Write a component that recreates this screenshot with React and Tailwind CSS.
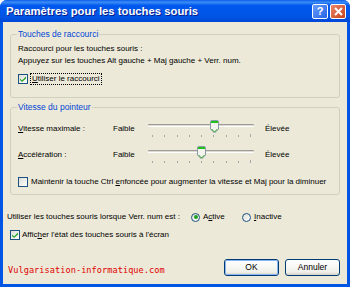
import React from 'react';

const ui = { fontFamily: '"Liberation Sans", Arial, sans-serif' };

const U = ({ children }) => <span className="underline underline-offset-[1px]">{children}</span>;

const CheckBox = ({ checked }) => (
    <span className="flex h-[10px] w-[10px] shrink-0 items-center justify-center border border-[#1C5180] bg-[linear-gradient(135deg,#DCDCD7,#FFFFFF)]">
        {checked && (
            <svg width="8" height="8" viewBox="0 0 8 8">
                <path d="M1 3.5 L3 5.5 L7 1.5 L7 3.5 L3 7 L1 5 Z" fill="#21A121" />
            </svg>
        )}
    </span>
);

const Radio = ({ checked }) => (
    <span className="flex h-[9px] w-[9px] shrink-0 items-center justify-center rounded-full border border-[#1C5180] bg-[linear-gradient(135deg,#DCDCD7,#FFFFFF)]">
        {checked && <span className="h-[4px] w-[4px] rounded-full bg-[#21A121]" />}
    </span>
);

const Slider = ({ pos }) => (
    <div className="relative h-[18px] w-[106px] shrink-0">
        <div className="absolute left-0 right-0 top-[4px] h-[3px] rounded-[1px] border-t border-[#9D9C99] border-b border-b-white bg-[#DCDAD1]" />
        <div className="absolute left-[4px] right-[3px] top-[15px] flex justify-between">
            {[0, 1, 2, 3, 4, 5, 6, 7].map(i => (
                <span key={i} className="h-[2px] w-[1px] bg-[#A7A6AA]" />
            ))}
            <span className="-mt-[1px] h-[3px] w-[1px] bg-[#A7A6AA]" />
        </div>
        <svg className="absolute top-0" style={{ left: pos }} width="9" height="14" viewBox="0 0 9 14">
            <path d="M0.5 1.5 Q0.5 0.5 1.5 0.5 H7.5 Q8.5 0.5 8.5 1.5 V9 L4.5 13 L0.5 9 Z" fill="#F4F3EE" stroke="#8C99A6" />
            <rect x="1" y="1" width="7" height="2" fill="#21C11C" />
            <path d="M1.5 9 L4.5 12 L7.5 9" fill="none" stroke="#21A121" />
        </svg>
    </div>
);

const Button = ({ children, primary }) => (
    <button className="flex h-[17px] w-[55px] shrink-0 items-center justify-center rounded-[3px] border border-[#003C74] bg-[linear-gradient(to_bottom,#FFFFFF,#F0F0EA_80%,#D6D0C5)] text-[8.5px] text-black">
        <span className={`flex h-full w-full items-center justify-center rounded-[2px] ${primary ? 'border border-[#8CB4F2]' : ''}`}>{children}</span>
    </button>
);

const App = () => {
    return (
        <div className="flex h-[287px] w-[350px] flex-col overflow-hidden rounded-t-[7px] bg-[#0055E5]" style={ui}>
            {/* title bar */}
            <div className="flex h-[22px] shrink-0 items-center justify-between bg-[linear-gradient(to_bottom,#0A5DE8_0%,#3D8DF8_10%,#0058EE_25%,#0055E5_75%,#0047D6_100%)] pl-[6px] pr-[4px]">
                <span className="text-[11.3px] font-bold text-white [text-shadow:1px_1px_0_#0A1E8C]">Paramètres pour les touches souris</span>
                <div className="flex gap-[2px]">
                    <span className="flex h-[15px] w-[16px] items-center justify-center rounded-[2px] border border-white bg-[linear-gradient(135deg,#6A9EFB,#2463E6)] text-[11px] font-bold leading-none text-white">?</span>
                    <span className="flex h-[15px] w-[16px] items-center justify-center rounded-[2px] border border-white bg-[linear-gradient(135deg,#E9866A,#C9431B)]">
                        <svg width="9" height="9" viewBox="0 0 9 9">
                            <path d="M1 1 L8 8 M8 1 L1 8" stroke="white" strokeWidth="2" />
                        </svg>
                    </span>
                </div>
            </div>

            {/* body */}
            <div className="mx-[3px] mb-[3px] flex flex-1 flex-col bg-[#ECE9D8] px-[7px] pt-[7px] text-[8px] leading-[12px] text-black">
                <fieldset className="h-[69px] rounded-[3px] border border-[#D0D0BF] px-[7px]">
                    <legend className="-ml-[1px] px-[1px] text-[8.5px] leading-[11px] text-[#0046D5]">Touches de raccourci</legend>
                    <div className="mt-[3px]">Raccourci pour les touches souris :</div>
                    <div>Appuyez sur les touches Alt gauche + Maj gauche + Verr. num.</div>
                    <div className="mt-[6px] flex items-center gap-[2px]">
                        <CheckBox checked />
                        <span className="border border-dotted border-black px-[1px] leading-[10px]"><U>U</U>tiliser le raccourci</span>
                    </div>
                </fieldset>

                <fieldset className="mt-[4px] h-[93px] rounded-[3px] border border-[#D0D0BF] px-[7px]">
                    <legend className="-ml-[1px] px-[1px] text-[8.5px] leading-[11px] text-[#0046D5]">Vitesse du pointeur</legend>
                    <div className="mt-[7px] flex items-center">
                        <span className="w-[95px]"><U>V</U>itesse maximale :</span>
                        <span className="w-[35px]">Faible</span>
                        <Slider pos={62} />
                        <span className="ml-[11px]">Élevée</span>
                    </div>
                    <div className="mt-[8px] flex items-center">
                        <span className="w-[95px]"><U>A</U>ccélération :</span>
                        <span className="w-[35px]">Faible</span>
                        <Slider pos={49} />
                        <span className="ml-[11px]">Élevée</span>
                    </div>
                    <div className="mt-[12px] flex items-center gap-[3px]">
                        <CheckBox />
                        <span className="whitespace-nowrap">Maintenir la touche Ctrl <U>e</U>nfoncée pour augmenter la vitesse et Maj pour la diminuer</span>
                    </div>
                </fieldset>

                <div className="-ml-[3px] mt-[16px] flex items-center">
                    <span className="w-[184px]">Utiliser les touches souris lorsque Verr. num est :</span>
                    <Radio checked />
                    <span className="ml-[3px] w-[39px]">A<U>c</U>tive</span>
                    <Radio />
                    <span className="ml-[3px]"><U>I</U>nactive</span>
                </div>
                <div className="mt-[6px] flex items-center gap-[2px]">
                    <CheckBox checked />
                    <span>Affic<U>h</U>er l'état des touches souris à l'écran</span>
                </div>

                <div className="mt-[17px] flex items-center">
                    <span className="-ml-[2px] flex-1 pt-[6px] text-[8.6px] tracking-[0.05px] text-[#E00000]" style={{ fontFamily: '"DejaVu Sans Mono", monospace' }}>Vulgarisation-informatique.com</span>
                    <Button primary>OK</Button>
                    <span className="w-[6px]" />
                    <Button>Annuler</Button>
                </div>
            </div>
        </div>
    );
};

export default App;
